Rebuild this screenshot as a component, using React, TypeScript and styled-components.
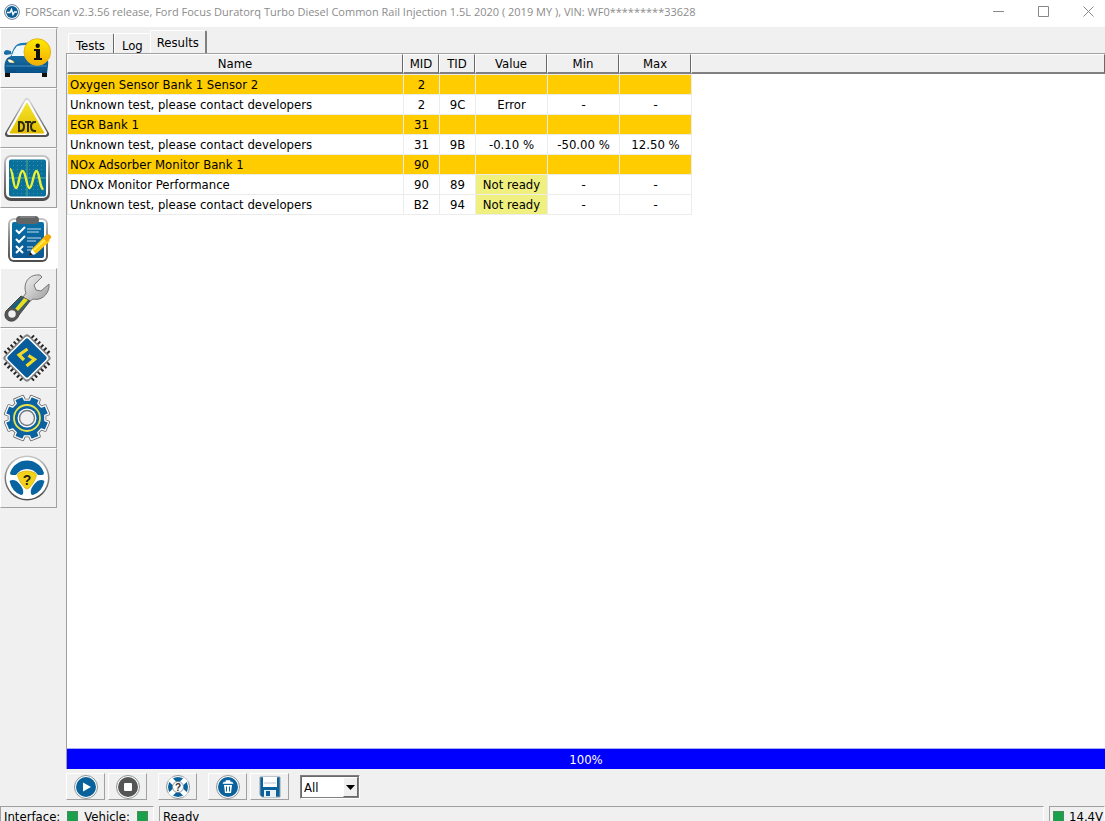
import React from 'react';
import styled, { createGlobalStyle, css } from 'styled-components';

const GlobalStyle = createGlobalStyle`
  *, *::before, *::after { box-sizing: border-box; }
  body { margin: 0; background: #f0f0f0; overflow: hidden; }
  body, button, select, table {
    font-family: 'DejaVu Sans Condensed', 'DejaVu Sans', sans-serif;
    font-stretch: condensed;
    font-size: 13px;
    color: #000;
  }
`;

const Window = styled.div`
  display: flex;
  flex-direction: column;
  height: 100vh;
`;

const TitleBar = styled.header`
  display: flex;
  align-items: center;
  flex: none;
  height: 27px;
  padding: 0 0 4px 4px;
  gap: 5px;
  background: #fff;
`;

const Title = styled.h1`
  flex: 1;
  margin: 0;
  font: 400 11px/20px 'Open Sans', sans-serif;
  white-space: nowrap;
  color: #8c8c8c;
`;

const WindowButton = styled.button`
  display: grid;
  place-items: center;
  width: 45px;
  height: 22px;
  padding: 0;
  border: 0;
  background: none;
  color: #888;
`;

const WindowButtons = styled.div`
  display: flex;
  flex: none;
  margin-right: -6px;
`;

const Body = styled.div`
  display: flex;
  flex: 1;
  min-height: 0;
`;

const Sidebar = styled.nav`
  flex: none;
  width: 66px;
`;

const SideButtons = styled.div`
  display: flex;
  flex-direction: column;
  width: 58px;
  border-top: 1px solid #a0a0a0;
`;

const raised = css`
  border: 1px solid;
  border-color: #fff #a0a0a0 #a0a0a0 #fff;
`;

const SideButton = styled.button<{ $active?: boolean }>`
  width: ${p => (p.$active ? 58 : 57)}px;
  height: 60px;
  padding: 0;
  ${raised}
  ${p => p.$active && css`border-color: #fff;`}
  background: ${p => (p.$active ? '#fff' : '#f0f0f0')};
  svg { display: block; }
`;

const Main = styled.main`
  display: flex;
  flex-direction: column;
  flex: 1;
  min-width: 0;
`;

const Tabs = styled.div`
  display: flex;
  align-items: flex-end;
  flex: none;
  height: 26px;
  padding-left: 2px;
`;

const Tab = styled.button<{ $active?: boolean }>`
  height: ${p => (p.$active ? 23 : 20)}px;
  padding: ${p => (p.$active ? '2px 6px 0' : '4px 7px 0')};
  border: solid #fff;
  border-width: 1px 0 0 1px;
  border-radius: 2px 2px 0 0;
  background: #f0f0f0;
  line-height: 16px;
  ${p => !p.$active && css`&:first-child { padding-right: 8px; border-right: 1px solid #696969; }`}
  ${p => p.$active && css`border-right: 2px solid #808080;`}
`;

const Grid = styled.div`
  flex: 1;
  min-height: 0;
  border: solid #a0a0a0;
  border-width: 1px 0 0 1px;
  background: #fff;
`;

const Table = styled.table`
  width: 100%;
  table-layout: fixed;
  border-collapse: separate;
  border-spacing: 0;
`;

const Col = styled.col<{ $w?: number }>`
  width: ${p => (p.$w ? `${p.$w}px` : 'auto')};
`;

const HeadCell = styled.th`
  height: 20px;
  padding: 1px 0 0;
  border: solid;
  border-width: 1px 1px 2px 1px;
  border-color: #fff #696969 #808080 #fff;
  background: #f0f0f0;
  font-weight: 400;
  line-height: 16px;
`;

const Cell = styled.td<{ $left?: boolean; $fill?: string }>`
  height: 20px;
  padding: 1px 2px 0;
  border: solid #ececec;
  border-width: 1px 0 0 1px;
  background: ${p => p.$fill ?? '#fff'};
  text-align: ${p => (p.$left ? 'left' : 'center')};
  line-height: 18px;
  white-space: nowrap;
  tr:last-child > & { height: 21px; border-bottom-width: 1px; }
`;

const Filler = styled.td`
  padding: 0;
  border-left: 1px solid #ececec;
`;

const Progress = styled.div`
  flex: none;
  height: 21px;
  border-top: 1px solid #a9a9ee;
  border-left: 1px solid #a0a0a0;
  background: #00f;
  color: #fff;
  line-height: 21px;
  text-align: center;
`;

const Toolbar = styled.div`
  display: flex;
  align-items: flex-start;
  flex: none;
  height: 37px;
  padding-top: 4px;
  gap: 11px;
`;

const Group = styled.div`
  display: flex;
  gap: 3px;
`;

const ToolButton = styled.button`
  display: grid;
  place-items: center;
  width: 39px;
  height: 27px;
  padding: 0;
  ${raised}
  background: #f0f0f0;
`;

const SelectBox = styled.div`
  position: relative;
  width: 60px;
  height: 24px;
  margin-top: 2px;
  border: 1px solid;
  border-color: #808080 #fff #fff #808080;
`;

const Select = styled.select`
  appearance: none;
  display: block;
  width: 58px;
  height: 22px;
  padding: 0 2px;
  border: 1px solid;
  border-color: #696969 #808080 #808080 #696969;
  border-radius: 0;
  background: #fff;
  outline: 0;
`;

const Arrow = styled.span`
  position: absolute;
  top: 1px;
  right: 1px;
  display: grid;
  place-items: center;
  width: 15px;
  height: 20px;
  border: 1px solid;
  border-color: #fff #696969 #696969 #fff;
  background: #f0f0f0;
  pointer-events: none;
`;

const StatusBar = styled.footer`
  display: flex;
  flex: none;
  height: 15px;
  gap: 5px;
  overflow: hidden;
`;

const Panel = styled.div<{ $w?: number }>`
  display: flex;
  align-items: center;
  flex: ${p => (p.$w ? `0 0 ${p.$w}px` : '1')};
  height: 21px;
  padding-left: 3px;
  border: 1px solid;
  border-color: #a0a0a0 #fff #fff #a0a0a0;
  line-height: 19px;
  white-space: nowrap;
`;

const StatusItem = styled.span`
  display: flex;
  align-items: center;
  gap: 7px;
  & + & { margin-left: 6px; }
`;

const Lamp = styled.span`
  width: 11px;
  height: 12px;
  border: 1px solid #4c8a5c;
  background: #18a04a;
`;

const VoltageItem = styled(StatusItem)`
  gap: 5px;
`;

const CarIcon = () => (
  <svg width="54" height="58" viewBox="1 1 54 58">
    <defs>
      <linearGradient id="car" x1="0" y1="0" x2="0" y2="1">
        <stop offset="0" stopColor="#1e7cb8" /><stop offset=".6" stopColor="#14659c" /><stop offset="1" stopColor="#0b4c80" />
      </linearGradient>
      <linearGradient id="info" x1="0" y1="0" x2="0" y2="1">
        <stop offset="0" stopColor="#ffea00" /><stop offset="1" stopColor="#f5ae00" />
      </linearGradient>
    </defs>
    <path d="M5 43h5v6H5zM42 43h5v6h-5z" fill="#111" />
    <path d="M5 45q-1-7 0-11c1-3 3-5 6-6l1-2-6 1-2-1v-2q1-2 3-2l4 1v3l3-6q2-4 7-5 9-1 17 0l8 14q3 3 2 9l-1 7z" fill="url(#car)" />
    <path d="M12 27q2-6 5-9 9-2 19 0l6 10H12z" fill="#edf7fc" />
    <path d="M6 39h41l-1 2H6zM16 42h24v2H16z" fill="#0a5690" />
    <path d="M6 38h41" stroke="#4390c2" />
    <path d="M7 31c4 0 7 1 8 4-3 1-7 0-8-4z" fill="#fff3a0" stroke="#093b62" strokeWidth=".7" />
    <circle cx="10" cy="33" r="1.500" fill="#fff" />
    <circle cx="37.300" cy="24" r="13.300" fill="url(#info)" stroke="#e4b51b" />
    <path d="M35 21h5v9h2v2h-8v-2h2v-7h-2v-2z" fill="#111" />
    <circle cx="37.700" cy="17.700" r="2.200" fill="#111" />
  </svg>
);

const DtcIcon = () => (
  <svg width="54" height="58" viewBox="1 1 54 58">
    <defs>
      <linearGradient id="tri" x1="0" y1="0" x2="0" y2="1">
        <stop offset="0" stopColor="#d6d6d6" /><stop offset="1" stopColor="#505050" />
      </linearGradient>
      <linearGradient id="triFill" x1="0" y1="0" x2="0" y2="1">
        <stop offset="0" stopColor="#f4e62d" /><stop offset="1" stopColor="#e3bd00" />
      </linearGradient>
    </defs>
    <path d="M27 13 46 46H8z" fill="url(#tri)" stroke="url(#tri)" strokeWidth="6" strokeLinejoin="round" />
    <path d="M27 14 45 45H9z" fill="#fff" stroke="#fff" strokeWidth="4" strokeLinejoin="round" />
    <path d="M27 15 44 45H10z" fill="url(#triFill)" stroke="url(#triFill)" strokeWidth="1" strokeLinejoin="round" />
    <g fill="none" stroke="#2c2b12" strokeWidth="2">
      <path d="M19 33v10M18 34h2q4 0 4 4.500t-4 4.500h-2M25 34h6M28 34v10M36 34h-1q-4 0-4 4.500t4 4.500h1" />
    </g>
  </svg>
);

const ScopeIcon = () => (
  <svg width="54" height="58" viewBox="1 1 54 58">
    <defs>
      <linearGradient id="frame" x1="0" y1="0" x2="0" y2="1">
        <stop offset="0" stopColor="#c8c8c8" /><stop offset=".45" stopColor="#858585" /><stop offset="1" stopColor="#4c4c4c" />
      </linearGradient>
      <linearGradient id="blue" x1="0" y1="0" x2="0" y2="1">
        <stop offset="0" stopColor="#0870a5" /><stop offset="1" stopColor="#0d5792" />
      </linearGradient>
      <pattern id="dots" width="4" height="4" patternUnits="userSpaceOnUse">
        <rect x="1" y="1" width="1" height="1" fill="#3d93ad" />
      </pattern>
    </defs>
    <rect x="4" y="7" width="46" height="46" rx="7" fill="url(#frame)" />
    <rect x="6" y="9" width="42" height="41" rx="5" fill="#fff" />
    <rect x="9" y="11.500" width="37" height="37" rx="2" fill="#08709a" />
    <rect x="10" y="12" width="35" height="36" fill="url(#dots)" />
    <path d="M27 12v36M9 30h37" stroke="#5aa988" />
    <path d="M10 21c3 0 3 19 6 19s3-17 6.500-17 4 17 7 17 4-17 7-17 3 18 7 18" fill="none" stroke="#eef032" strokeWidth="2.400" />
  </svg>
);

const ChecklistIcon = () => (
  <svg width="56" height="58" viewBox="1 1 56 58">
    <rect x="8" y="10" width="40" height="44" rx="6" fill="url(#frame)" />
    <rect x="10" y="12" width="36" height="40" rx="4" fill="#fff" />
    <rect x="12" y="14" width="32" height="36" rx="2" fill="url(#blue)" />
    <rect x="16" y="8" width="23" height="8" rx="4" fill="#626466" />
    <path d="M20 9h15" stroke="#999" />
    <path d="m16 22 3 3 6-6M16 31l3 3 6-6M16 38l7 7M23 38l-7 7" fill="none" stroke="#fff" strokeWidth="2" />
    <path d="M27 21h14M27 24h12M27 30h14M27 33h9M27 39h6M27 42h4" stroke="#c4dced" />
    <path d="m32 41 13-13 5 5-13 12-7 2z" fill="#ffcb0c" />
    <path d="m34 42 13-12" stroke="#fff168" strokeWidth="1.500" />
    <path d="m43 30 3-3q3-2 5 1 1 2-1 3l-3 3z" fill="#f3a800" />
    <path d="m32 41 4 5-7 2z" fill="#fff" />
    <path d="m30 44 3 3-4 1z" fill="#111" />
  </svg>
);

const WrenchIcon = () => (
  <svg width="54" height="58" viewBox="1 1 54 58">
    <defs>
      <linearGradient id="steel" x1="0" y1="0" x2="1" y2="1">
        <stop offset="0" stopColor="#f4f4f4" /><stop offset=".5" stopColor="#c9c9c9" /><stop offset="1" stopColor="#999" />
      </linearGradient>
    </defs>
    <path d="M40 7C31 6 25 12 25 20q0 3 1 5l-3 4 6 5 4-3c8 2 15-4 16-12v-3l-8 7-5-1-2-5 8-8z" fill="url(#steel)" stroke="#777" strokeWidth="1" />
    <path d="M21 28 6 43c-3 6 1 11 7 10 3-1 5-3 6-6L30 33z" fill="#505c5f" stroke="#454545" />
    <path d="M21 30 9 41l7 5 12-13z" fill="#155f83" />
    <path d="m24 30-9 11 3 2 10-11z" fill="#e9df1f" />
    <circle cx="12" cy="46" r="5" fill="#f0f0f0" stroke="#555" strokeWidth="2.500" />
  </svg>
);

const ChipIcon = () => (
  <svg width="54" height="58" viewBox="1 1 54 58">
    <g transform="translate(27 30) rotate(45)">
      {[-11, -6.6, -2.2, 2.2, 6.6, 11].map(n => (
        <path key={n} d={`M${n} -21V21M-21 ${n}H21`} stroke="#292929" strokeWidth="2" />
      ))}
      <rect x="-17.500" y="-17.500" width="35" height="35" rx="3" fill="#858585" />
      <rect x="-16" y="-16" width="32" height="32" rx="3" fill="#fff" />
      <rect x="-14.500" y="-14.500" width="29" height="29" rx="2" fill="#075c9b" />
    </g>
    <path d="m27.500 21-8.500 6 5 5M28.500 27.500l6 4-8 6.500" fill="none" stroke="#f2db26" strokeWidth="3.200" />
  </svg>
);

const gear = Array.from({ length: 8 }, (_, i) => {
  const a = (i * Math.PI) / 4 + Math.PI / 8;
  return [[-0.25, 18], [-0.2, 22], [0.2, 22], [0.25, 18]]
    .map(([d, r]) => `${27 + Math.cos(a + d) * r},${30 + Math.sin(a + d) * r}`)
    .join(' ');
}).join(' ');

const GearIcon = () => (
  <svg width="54" height="58" viewBox="1 1 54 58">
    <polygon points={gear} fill="#fff" stroke="#6b6f72" strokeWidth="3" strokeLinejoin="round" />
    <polygon points={gear} fill="#0c629e" stroke="#fff" strokeWidth="1.300" strokeLinejoin="round" />
    <circle cx="27" cy="30" r="13" fill="none" stroke="#e8e348" strokeWidth="1.800" />
    <circle cx="27" cy="30" r="9.500" fill="#fff" />
    <circle cx="27" cy="30" r="7.500" fill="#f0f0f0" stroke="#6c7a82" strokeWidth="1.400" />
  </svg>
);

const WheelIcon = () => (
  <svg width="54" height="58" viewBox="1 1 54 58">
    <circle cx="27" cy="30" r="22.500" fill="url(#frame)" />
    <circle cx="27" cy="30" r="21" fill="#fff" />
    <path d="M10 25a17.800 17.800 0 0 1 34 0q0 2-2 2h-4q-4-6-11-6t-11 6h-4q-2 0-2-2z" fill="#0864a0" />
    <path d="M9.500 33q3-2 7 0 5 4 6.500 9 1 5-2 5-9-3-11.500-14z" fill="#0864a0" />
    <path d="M44.500 33q-3-2-7 0-5 4-6.500 9-1 5 2 5 9-3 11.500-14z" fill="#0864a0" />
    <path d="M19 25q8-4 16 0 2 1 1 4-2 6-7 11-2 2-4 0-5-5-7-11-1-3 1-4z" fill="#f5d21a" stroke="#e4bd12" strokeWidth="1" />
    <text x="27" y="37" textAnchor="middle" fontFamily="Liberation Sans, sans-serif" fontSize="14" fontWeight="700" fill="#222">?</text>
  </svg>
);

const Round = ({ fill, children }: { fill: string; children: React.ReactNode }) => (
  <svg width="24" height="24" viewBox="0 0 24 24">
    <circle cx="12" cy="12" r="11.500" fill="#fff" stroke="#8c9499" />
    <circle cx="12" cy="12" r="10" fill={fill} />
    {children}
  </svg>
);

const LogoIcon = () => (
  <svg width="16" height="16" viewBox="0 0 16 16">
    <circle cx="8" cy="8" r="7.400" fill="#fff" stroke="#66839a" />
    <circle cx="8" cy="8" r="6" fill="#0c5e94" />
    <path d="M3 8.500h3l1.500-3 1.500 5 1.500-2.500H13" fill="none" stroke="#fff" strokeWidth="1.400" />
  </svg>
);

const sideItems = [
  { label: 'Vehicle information', Icon: CarIcon },
  { label: 'Trouble codes', Icon: DtcIcon },
  { label: 'Oscilloscope', Icon: ScopeIcon },
  { label: 'Tests', Icon: ChecklistIcon, active: true },
  { label: 'Service', Icon: WrenchIcon },
  { label: 'Modules', Icon: ChipIcon },
  { label: 'Settings', Icon: GearIcon },
  { label: 'Help', Icon: WheelIcon },
];

const columns = [
  { name: 'Name', width: 336 },
  { name: 'MID', width: 36 },
  { name: 'TID', width: 36 },
  { name: 'Value', width: 72 },
  { name: 'Min', width: 72 },
  { name: 'Max', width: 72 },
];

const unknown = 'Unknown test, please contact developers';
const rows = [
  ['Oxygen Sensor Bank 1 Sensor 2', '2', '', '', '', ''],
  [unknown, '2', '9C', 'Error', '-', '-'],
  ['EGR Bank 1', '31', '', '', '', ''],
  [unknown, '31', '9B', '-0.10 %', '-50.00 %', '12.50 %'],
  ['NOx Adsorber Monitor Bank 1', '90', '', '', '', ''],
  ['DNOx Monitor Performance', '90', '89', 'Not ready', '-', '-'],
  [unknown, 'B2', '94', 'Not ready', '-', '-'],
];

const cellFill = (row: string[], text: string) => {
  if (!row[2]) return '#ffcc00';
  return text === 'Not ready' ? '#f0f080' : undefined;
};

export default function App() {
  return (
    <Window>
      <GlobalStyle />
      <TitleBar>
        <LogoIcon />
        <Title>FORScan v2.3.56 release, Ford Focus Duratorq Turbo Diesel Common Rail Injection 1.5L 2020 ( 2019 MY ), VIN: WF0*********33628</Title>
        <WindowButtons>
          <WindowButton aria-label="Minimize"><svg width="11" height="11"><path d="M0 5.500h11" stroke="currentColor" /></svg></WindowButton>
          <WindowButton aria-label="Maximize"><svg width="11" height="11"><path d="M.5.500h10v10H.5z" fill="none" stroke="currentColor" /></svg></WindowButton>
          <WindowButton aria-label="Close"><svg width="11" height="11"><path d="m.5.500 10 10m0-10-10 10" stroke="currentColor" /></svg></WindowButton>
        </WindowButtons>
      </TitleBar>
      <Body>
        <Sidebar>
          <SideButtons>
            {sideItems.map(({ label, Icon, active }) => (
              <SideButton key={label} $active={active} aria-label={label}><Icon /></SideButton>
            ))}
          </SideButtons>
        </Sidebar>
        <Main>
          <Tabs role="tablist">
            <Tab role="tab">Tests</Tab>
            <Tab role="tab">Log</Tab>
            <Tab role="tab" $active aria-selected>Results</Tab>
          </Tabs>
          <Grid>
            <Table>
              <colgroup>
                {columns.map(c => <Col key={c.name} $w={c.width} />)}
                <Col />
              </colgroup>
              <thead>
                <tr>
                  {columns.map(c => <HeadCell key={c.name} scope="col">{c.name}</HeadCell>)}
                  <HeadCell as="td" />
                </tr>
              </thead>
              <tbody>
                {rows.map((row, r) => (
                  <tr key={r}>
                    {row.map((text, c) => (
                      <Cell key={c} $left={c === 0} $fill={cellFill(row, text)}>{text}</Cell>
                    ))}
                    <Filler />
                  </tr>
                ))}
              </tbody>
            </Table>
          </Grid>
          <Progress role="progressbar" aria-valuenow={100}>100%</Progress>
          <Toolbar>
            <Group>
              <ToolButton aria-label="Run">
                <Round fill="#0a629c"><path d="M9 7.500 17 12l-8 4.500z" fill="#fff" /></Round>
              </ToolButton>
              <ToolButton aria-label="Stop">
                <Round fill="#555"><rect x="8" y="8" width="8" height="8" rx="1" fill="#fff" /></Round>
              </ToolButton>
            </Group>
            <ToolButton aria-label="Help">
              <Round fill="#0a629c">
                <path d="m4 4 16 16M20 4 4 20" stroke="#fff" strokeWidth="5" />
                <circle cx="12" cy="12" r="5.500" fill="#fff" stroke="#72818c" strokeWidth=".8" />
                <text x="12" y="15.500" textAnchor="middle" fontFamily="Liberation Sans, sans-serif" fontSize="10" fontWeight="700" fill="#333">?</text>
              </Round>
            </ToolButton>
            <Group>
              <ToolButton aria-label="Delete">
                <Round fill="#0a629c">
                  <path d="M8 10h8l-1 8H9z" fill="#fff" />
                  <path d="M7 8.500q0-1.500 2-1.500h6q2 0 2 1.500zM10 7V5.500h4V7" fill="#fff" stroke="#fff" strokeWidth=".6" />
                  <path d="M10.500 11.500v5M13.500 11.500v5" stroke="#0a629c" />
                </Round>
              </ToolButton>
              <ToolButton aria-label="Save">
                <svg width="22" height="22" viewBox="0 0 22 22">
                  <path d="M1 1h20v20H3l-2-2z" fill="#0a629c" stroke="#8b9da8" />
                  <path d="M4 1h14v10H4z" fill="#fff" />
                  <path d="M5 7h12" stroke="#b6c6d0" />
                  <path d="M5 14h12v7H5z" fill="#e9f0f4" />
                  <path d="M7 15h4v5H7z" fill="#0a629c" />
                </svg>
              </ToolButton>
            </Group>
            <SelectBox>
              <Select aria-label="Filter" defaultValue="All"><option>All</option></Select>
              <Arrow><svg width="9" height="5"><path d="M0 0h9L4.500 5z" /></svg></Arrow>
            </SelectBox>
          </Toolbar>
        </Main>
      </Body>
      <StatusBar>
        <Panel $w={154}>
          <StatusItem>Interface:<Lamp /></StatusItem>
          <StatusItem>Vehicle:<Lamp /></StatusItem>
        </Panel>
        <Panel>Ready</Panel>
        <Panel $w={56}>
          <VoltageItem><Lamp />14.4V</VoltageItem>
        </Panel>
      </StatusBar>
    </Window>
  );
}
